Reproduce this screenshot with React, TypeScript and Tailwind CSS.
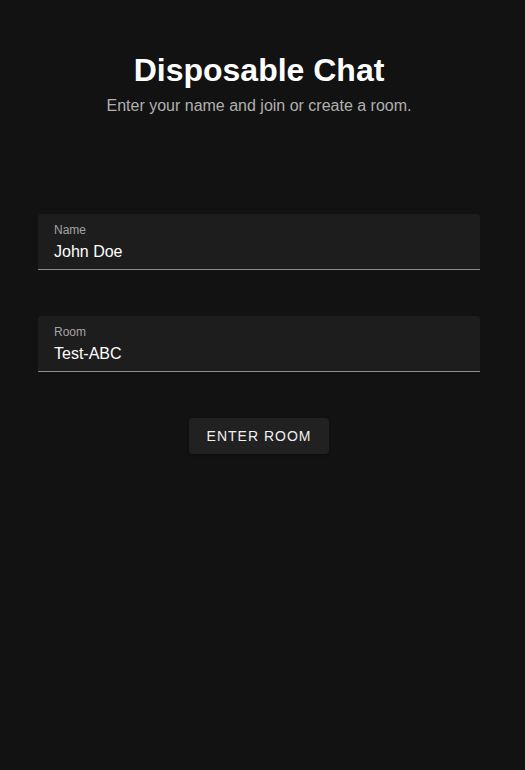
import React from 'react';

const Field: React.FC<{ label: string; value: string }> = ({ label, value }) => (
  <div className="h-[56px] rounded-t-[4px] bg-[#1d1d1d] border-b border-[#8c8c8c] px-4 pt-[8px] flex flex-col">
    <span className="text-[12px] leading-[16px] text-[#a3a3a3]">{label}</span>
    <span className="text-[16px] leading-[24px] text-white mt-[2px]">{value}</span>
  </div>
);

export default function App() {
  return (
    <div className="min-h-[770px] bg-[#121212] font-['Liberation_Sans',Arial,sans-serif] pl-[38px] pr-[45px] pt-[46px]">
      <div className="text-center">
        <h1 className="text-[32px] leading-[48px] font-bold text-white">Disposable Chat</h1>
        <p className="text-[16px] leading-[24px] text-[#b0b0b0]">Enter your name and join or create a room.</p>
      </div>
      <div className="mt-[96px] flex flex-col gap-[46px]">
        <Field label="Name" value="John Doe" />
        <Field label="Room" value="Test-ABC" />
      </div>
      <div className="mt-[46px] flex justify-center">
        <button className="h-[36px] w-[140px] rounded-[4px] bg-[#212121] text-[14px] font-medium tracking-[1px] text-[#f0f0f0] shadow-[0_1px_3px_rgba(0,0,0,0.3)]">
          ENTER ROOM
        </button>
      </div>
    </div>
  );
}
